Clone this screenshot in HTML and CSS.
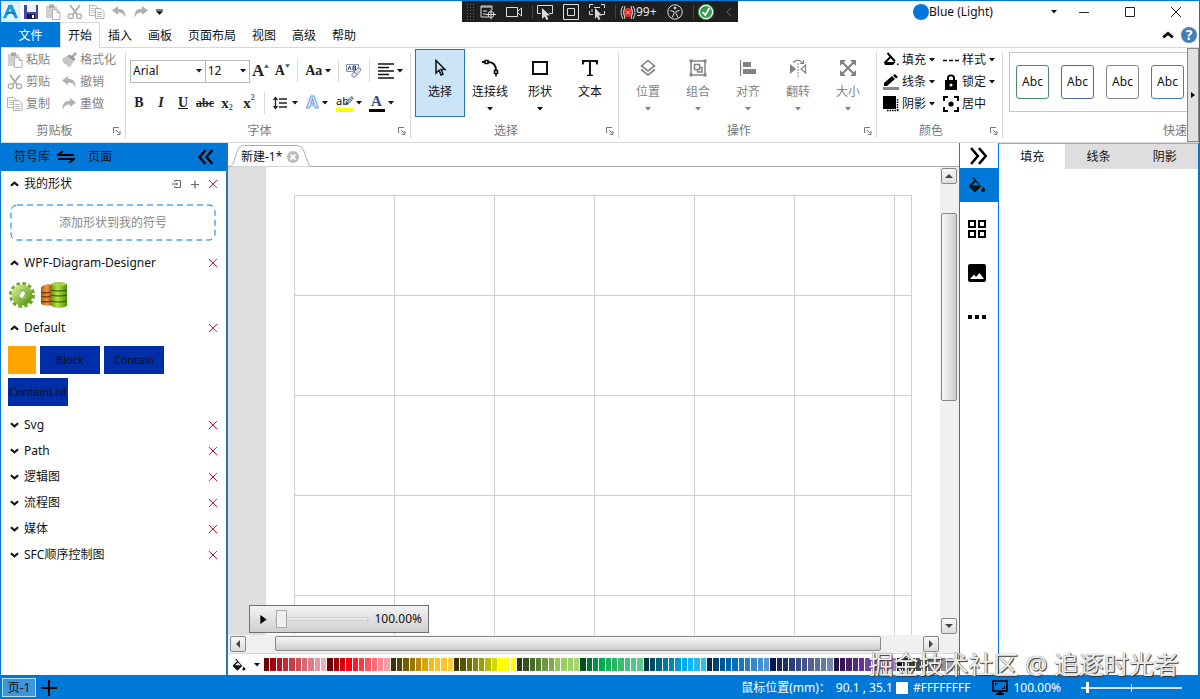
FILE: index.html
```html
<!DOCTYPE html>
<html lang="zh-CN">
  <head>
    <meta charset="UTF-8" />
    <meta name="viewport" content="width=device-width, initial-scale=1.0" />
    <title>新建-1*</title>
    <link rel="stylesheet" href="styles.css">
  </head>
  <body>
    <!-- shared icons -->
    <svg class="sprite" aria-hidden="true">
      <symbol id="caret" viewBox="0 0 6 4"><path d="M0 0h6L3 3.6z" fill="currentColor" /></symbol>
      <symbol id="close" viewBox="0 0 10 10"><path d="M1 1l8 8M9 1L1 9" stroke="currentColor" stroke-width="1" /></symbol>
      <symbol id="up" viewBox="0 0 10 6"><path d="M1 5l4-3.4L9 5" fill="none" stroke="currentColor" stroke-width="2.400" /></symbol>
      <symbol id="down" viewBox="0 0 10 6"><path d="M1 1l4 3.4L9 1" fill="none" stroke="currentColor" stroke-width="2.400" /></symbol>
      <symbol id="launcher" viewBox="0 0 8 8"><path d="M.5 6V.5H6M3 3l3.5 3.500M7 4v3.500H4" fill="none" stroke="currentColor" /></symbol>
      <symbol id="paste" viewBox="0 0 16 16">
        <path d="M1 2h3V0h5v2h3v3H7v9H1z" fill="#d0d0d0" /><path d="M4 1h5v3H4z" fill="#aaa" />
        <path d="M7.500 5.500h4.500l3 3v7h-7.500z" fill="#fff" stroke="#b0b0b0" /><path d="M12 5.500v3h3" fill="none" stroke="#b0b0b0" />
      </symbol>
      <symbol id="cut" viewBox="0 0 16 16">
        <path d="M3 1l7.500 10M13 1L5.500 11" fill="none" stroke="#aaa" stroke-width="1.800" />
        <ellipse cx="3.800" cy="12.200" rx="2.600" ry="2.300" fill="none" stroke="#aaa" stroke-width="1.300" /><ellipse cx="12" cy="12.200" rx="2.600" ry="2.300" fill="none" stroke="#aaa" stroke-width="1.300" />
      </symbol>
      <symbol id="copy" viewBox="0 0 16 16">
        <path d="M.5 1.500h6l3 3v7h-9z" fill="#fff" stroke="#b5b5b5" /><path d="M2 4.500h4M2 6.500h5M2 8.500h5" stroke="#c4c4c4" />
        <path d="M6.500 4.500h5.500l3 3v7H6.500z" fill="#fff" stroke="#b0b0b0" /><path d="M8 8.500h5M8 10.500h5M8 12.500h5" stroke="#b8b8b8" />
      </symbol>
      <symbol id="undo" viewBox="0 0 16 16"><path d="M1 6.500L7 2v2.800c5 0 8 3.200 7.500 9.200C13 10 11 8.500 7 8.500V11z" fill="#b0b0b0" /></symbol>
      <symbol id="redo" viewBox="0 0 16 16"><path d="M15 6.500L9 2v2.800C4 4.800 1 8 1.500 14 3 10 5 8.500 9 8.500V11z" fill="#b0b0b0" /></symbol>
      <symbol id="bucket" viewBox="0 0 20 20"><path d="M6 1l-1.300 1.300 2.500 2.500-5.700 5.700q-.8.900 0 1.800l5.300 5.300q.9.700 1.700 0l6.200-6.200zM8.500 6.300l4.200 4.200H4.300z" fill="currentColor" fill-rule="evenodd" /><path d="M17 12q4.500 5.500 0 5.700t0-5.700z" fill="currentColor" /></symbol>
    </svg>

    <div class="window">
      <header class="title-bar">
        <div class="quick-access">
          <svg class="logo" viewBox="0 0 20 20" aria-label="logo"><path d="M.5.5h19v19H.5z" fill="#e6f5fc" stroke="#b7ddf0" stroke-width=".6" /><path d="M2 17L8 3h4l6 14h-3.500l-5-10-4 10z" fill="#19a0dc" /><path d="M6 13q4-4 9 0" fill="none" stroke="#0879b8" stroke-width="2" /></svg>
          <button aria-label="保存"><svg viewBox="0 0 16 16"><path d="M1 1h14v14H1z" fill="#4148a8" /><path d="M4 1h9v7H4z" fill="#eef2fa" /><path d="M4 10h8v5H4z" fill="#161b50" /><path d="M9 11h2v3H9z" fill="#fff" /></svg></button>
          <button aria-label="粘贴"><svg><use href="#paste" /></svg></button>
          <button aria-label="剪切"><svg><use href="#cut" /></svg></button>
          <button aria-label="复制"><svg><use href="#copy" /></svg></button>
          <button aria-label="撤销"><svg><use href="#undo" /></svg></button>
          <button aria-label="重做"><svg><use href="#redo" /></svg></button>
          <button class="more" aria-label="更多"><svg viewBox="0 0 8 6"><path d="M0 0h8v1.200H0zM0 2.200h8L4 6z" /></svg></button>
        </div>
        <div class="theme">
          <span class="theme-dot"></span>
          <select aria-label="主题"><option>Blue (Light)</option></select>
          <svg class="caret"><use href="#caret" /></svg>
        </div>
        <div class="window-buttons">
          <button aria-label="最小化"><svg viewBox="0 0 10 10"><path d="M0 5.500h10" /></svg></button>
          <button aria-label="最大化"><svg viewBox="0 0 10 10"><path d="M.5.5h9v9h-9z" /></svg></button>
          <button aria-label="关闭"><svg viewBox="0 0 10 10"><path d="M0 0l10 10M10 0L0 10" /></svg></button>
        </div>
        <div class="debug-bar">
          <span class="grip"></span>
          <svg viewBox="0 0 16 16"><path d="M9 13H1V2h11v4M1 3h11M3 7h4M3 10h3" /><circle cx="11" cy="10.500" r="3" /><path d="M11 5.500v10M6 10.500h10" /></svg>
          <svg viewBox="0 0 16 16"><path d="M.5 3.500h11v9H.5zM12 7l3.500-3v8L12 9" /></svg>
          <i></i>
          <svg viewBox="0 0 16 16"><path d="M4 9.500H.5v-8h15v8H12" /><path d="M5 4l8 7.500H9.500l2 3.500-2 1-1.800-3.500L5 15z" fill="#ddd" stroke="none" /></svg>
          <svg viewBox="0 0 16 16"><path d="M.5.5h15v15H.5zM4.500 4.500h7v7h-7z" /></svg>
          <svg viewBox="0 0 16 16"><path d="M.5 4V.5H4M12 .5h3.500V4M.5 7v3.500H4M15.500 7v3.500H12M5 3.500h6M3 5v3" /><path d="M6 4l7 7.500H9.500l2 3.500-2 1-1.500-3.500L6 15z" fill="#ddd" stroke="none" /></svg>
          <i></i>
          <span class="errors"><svg viewBox="0 0 16 16"><circle cx="8" cy="8.500" r="4.800" fill="#d82f22" stroke="none" /><path d="M6.300 6.800l3.400 3.400M9.700 6.800l-3.400 3.400M3 2Q-1 8 3 15M5 2Q2 8 5 15M13 2q4 6 0 13M11 2q3 6 0 13" /></svg>99+</span>
          <svg viewBox="0 0 16 16"><circle cx="8" cy="8" r="7.200" /><circle cx="8" cy="4" r="1" fill="#ddd" /><path d="M3.500 6.500L7 7.500v2L5 13.500M12.500 6.500L9 7.500v2l2 4" /></svg>
          <i></i>
          <svg viewBox="0 0 16 16"><circle cx="8" cy="8" r="7.600" fill="#fff" stroke="#43a251" /><circle cx="8" cy="8" r="6" fill="#35984a" stroke="none" /><path d="M4.500 8l2.700 3 4.300-7" stroke="#fff" stroke-width="1.800" /></svg>
          <svg class="fold" viewBox="0 0 8 12"><path d="M7 1L2 6l5 5" stroke="#777" /></svg>
        </div>
      </header>

      <nav class="menu">
        <button class="file">文件</button>
        <button class="active">开始</button>
        <button>插入</button>
        <button>画板</button>
        <button>页面布局</button>
        <button>视图</button>
        <button>高级</button>
        <button>帮助</button>
        <div class="menu-right">
          <button aria-label="折叠功能区"><svg class="fold-icon"><use href="#up" /></svg></button>
          <button class="help" aria-label="帮助">?</button>
        </div>
      </nav>

      <section class="ribbon">
        <div class="group clipboard">
          <div class="rows">
            <button disabled><svg><use href="#paste" /></svg>粘贴</button>
            <button disabled><svg viewBox="0 0 16 16"><path d="M9.500 5L14 0l2 1.500-4 5z" fill="#aaa" /><path d="M1 7l5-3 7 5-4 6-3-1-1-2-2 0z" fill="#c6c6c6" /><path d="M6 4l7 5 1.500-2L9 2.500z" fill="#999" /></svg>格式化</button>
            <button disabled><svg><use href="#cut" /></svg>剪贴</button>
            <button disabled><svg><use href="#undo" /></svg>撤销</button>
            <button disabled><svg><use href="#copy" /></svg>复制</button>
            <button disabled><svg><use href="#redo" /></svg>重做</button>
          </div>
          <footer><span>剪贴板</span><button aria-label="剪贴板设置"><svg><use href="#launcher" /></svg></button></footer>
        </div>

        <div class="group font">
          <div class="tool-row">
            <label class="combo"><select aria-label="字体"><option>Arial</option></select><svg class="caret"><use href="#caret" /></svg></label>
            <label class="combo size"><select aria-label="字号"><option>12</option></select><svg class="caret"><use href="#caret" /></svg></label>
            <button class="glyph grow" aria-label="增大字号">A<svg viewBox="0 0 6 4"><path d="M0 4h6L3 0z" /></svg></button>
            <button class="glyph shrink" aria-label="减小字号">A<svg viewBox="0 0 6 4"><path d="M0 0h6L3 4z" /></svg></button>
            <i></i>
            <button class="glyph wide" aria-label="大小写">Aa<svg class="caret"><use href="#caret" /></svg></button>
            <i></i>
            <button aria-label="清除格式"><svg class="icon" viewBox="0 0 16 16"><path d="M.5 1.500h12v7H.5z" fill="#f4f6fc" stroke="#8b93b5" /><path d="M2 7l1.500-4L5 7M7 3v4h2.500V3zM7 5h2" fill="none" stroke="#333d6b" /><path d="M6 11l6-6q3-1 3 2l-6 7q-4 1-3-3z" fill="#dfe4ee" stroke="#8089a3" /><path d="M8 9q3 1 3 3" fill="none" stroke="#8089a3" /></svg></button>
            <i></i>
            <button class="wide" aria-label="对齐"><svg class="icon" viewBox="0 0 16 16"><path d="M0 1h16M0 4.500h11M0 8h16M0 11.500h11M0 15h16" stroke="#111" stroke-width="1.600" /></svg><svg class="caret"><use href="#caret" /></svg></button>
          </div>
          <div class="tool-row second">
            <button class="glyph"><b>B</b></button>
            <button class="glyph"><em>I</em></button>
            <button class="glyph"><u>U</u></button>
            <button class="glyph strike"><s>abc</s></button>
            <button class="glyph script">x<sub>2</sub></button>
            <button class="glyph script">x<sup>2</sup></button>
            <i></i>
            <button class="wide" aria-label="行距"><svg class="icon" viewBox="0 0 16 16"><path d="M2.500 3v10M.5 5l2-2.500 2 2.500M.5 11l2 2.500 2-2.500M6 4h8M6 8h8M6 12h8" fill="none" stroke="#222" stroke-width="1.300" /></svg><svg class="caret"><use href="#caret" /></svg></button>
            <button class="glyph wide outline">A<svg class="caret"><use href="#caret" /></svg></button>
            <button class="wide" aria-label="突出显示"><span class="marker">ab<svg viewBox="0 0 16 16"><path d="M3 13l2-5 6-6 3 2-6 7z" fill="#9ab0c9" stroke="#49617e" /><path d="M3 13l2-4 2 2z" fill="#333" /></svg></span><svg class="caret"><use href="#caret" /></svg></button>
            <button class="glyph wide"><span class="ink">A</span><svg class="caret"><use href="#caret" /></svg></button>
          </div>
          <footer><span>字体</span><button aria-label="字体设置"><svg><use href="#launcher" /></svg></button></footer>
        </div>

        <div class="group select">
          <div class="big-row">
            <button class="big active"><svg viewBox="0 0 18 18"><path d="M5 1.500v12.500l3-2.800 2 4.800 2-.9-2-4.600h4z" fill="none" stroke="currentColor" stroke-width="1.500" /></svg>选择</button>
            <button class="big"><svg viewBox="0 0 18 18"><path d="M7 3q8 0 8 9" fill="none" stroke="currentColor" stroke-width="2" /><path d="M1 3h3" stroke="currentColor" stroke-width="2" /><path d="M4 1.500h3v3H4zM13.500 11.500h3v3h-3zM15 14.500v3" fill="#fff" stroke="currentColor" stroke-width="1.600" /></svg>连接线<svg class="caret"><use href="#caret" /></svg></button>
            <button class="big"><svg viewBox="0 0 18 18"><path d="M2 3h14v12H2z" fill="none" stroke="currentColor" stroke-width="2" /></svg>形状<svg class="caret"><use href="#caret" /></svg></button>
            <button class="big"><svg viewBox="0 0 18 18"><path d="M1 1h16v4.500h-1.500L14.500 3H10v12.500l2 .5v1H6v-1l2-.5V3H3.500l-1 2.500H1z" fill="currentColor" /></svg>文本</button>
          </div>
          <footer><span>选择</span><button aria-label="选择设置"><svg><use href="#launcher" /></svg></button></footer>
        </div>

        <div class="group arrange">
          <div class="big-row">
            <button class="big" disabled><svg viewBox="0 0 18 18"><path d="M9 1.500L15.500 7 9 12 2.500 7zM2 10.500L9 16l7-5.500" fill="none" stroke="currentColor" stroke-width="1.600" /></svg>位置<svg class="caret"><use href="#caret" /></svg></button>
            <button class="big" disabled><svg viewBox="0 0 18 18"><path d="M2 2h14v14H2zM5.500 5.500h5v5h-5zM11 8.500h2v4.500H8.500v-2" fill="none" stroke="currentColor" stroke-width="1.500" /><path d="M.5.500h3v3h-3zM14.500.500h3v3h-3zM.5 14.500h3v3h-3zM14.500 14.500h3v3h-3z" fill="currentColor" /></svg>组合<svg class="caret"><use href="#caret" /></svg></button>
            <button class="big" disabled><svg viewBox="0 0 18 18"><path d="M1 1h1.200v16H1zM4 3h8v5H4zM4 10h13v5H4z" fill="currentColor" /></svg>对齐<svg class="caret"><use href="#caret" /></svg></button>
            <button class="big" disabled><svg viewBox="0 0 18 18"><path d="M1 5l6 5-6 5z" fill="currentColor" /><path d="M16.500 6v8L12 10zM4 3.500Q9-1 14 4M14.500 1v3.500H11" fill="none" stroke="currentColor" stroke-width="1.200" /><path d="M9 4v14" stroke="currentColor" stroke-dasharray="2 1" /></svg>翻转<svg class="caret"><use href="#caret" /></svg></button>
            <button class="big" disabled><svg viewBox="0 0 18 18"><path d="M3 3l12 12M15 3L3 15" stroke="currentColor" stroke-width="2.200" /><path d="M1 1h6L1 7zM17 1v6l-6-6zM1 17v-6l6 6zM17 17h-6l6-6z" fill="currentColor" /></svg>大小<svg class="caret"><use href="#caret" /></svg></button>
          </div>
          <footer><span>操作</span><button aria-label="操作设置"><svg><use href="#launcher" /></svg></button></footer>
        </div>

        <div class="group color">
          <div class="rows">
            <button><svg viewBox="0 0 16 16"><path d="M4.500 1l7.500 8.500M8 4.500L2 10.500" fill="none" stroke="#000" stroke-width="1.900" /><path d="M1 10h11.500L10 13H2zM14 11.500h1.500v1.500H14z" /></svg>填充<svg class="caret"><use href="#caret" /></svg></button>
            <button><svg viewBox="0 0 16 16"><path d="M0 8.500h4M6 8.500h4M12 8.500h4" stroke="#000" stroke-width="1.500" /></svg>样式<svg class="caret"><use href="#caret" /></svg></button>
            <button><svg viewBox="0 0 16 16"><path d="M1 12V9l8-7 3 3-8 7zM10 1.500L12 0l3 3-2 1.500z" /><path d="M0 13h16v3H0z" fill="#888" /></svg>线条<svg class="caret"><use href="#caret" /></svg></button>
            <button><svg viewBox="0 0 16 16"><path d="M4 6V4q0-3.500 4-3.500T12 4v2h2v10H2V6zm2 0h4V4q0-1.800-2-1.800T6 4zm2 3.500a1.500 1.500 0 100 3 1.500 1.500 0 000-3z" fill-rule="evenodd" /></svg>锁定<svg class="caret"><use href="#caret" /></svg></button>
            <button><svg viewBox="0 0 16 16"><path d="M0 0h13v13H0z" /><path d="M14.500 3v12.500M4 14.500h12" stroke="#000" stroke-width="1.500" stroke-dasharray="1.500 1" /></svg>阴影<svg class="caret"><use href="#caret" /></svg></button>
            <button><svg viewBox="0 0 16 16"><path d="M1 5V1h4M11 1h4v4M1 11v4h4M11 15h4v-4" fill="none" stroke="#000" stroke-width="2" /><circle cx="8" cy="8" r="2.600" /></svg>居中</button>
          </div>
          <footer><span>颜色</span><button aria-label="颜色设置"><svg><use href="#launcher" /></svg></button></footer>
        </div>

        <div class="group styles">
          <div class="gallery">
            <button class="green">Abc</button>
            <button class="blue">Abc</button>
            <button class="gray">Abc</button>
            <button class="sky">Abc</button>
          </div>
          <footer><span>快速</span></footer>
        </div>
        <button class="ribbon-next" aria-label="向右滚动"><svg viewBox="0 0 4 6"><path d="M0 0l4 3-4 3z" /></svg></button>
      </section>

      <main class="workspace">
        <aside class="library">
          <header class="library-head">
            <button>符号库</button>
            <svg viewBox="0 0 18 12"><path d="M0 4h17M6 0L1 4M1 8h17M12 12l5-4" fill="none" stroke="#000" stroke-width="1.800" /></svg>
            <button>页面</button>
            <button class="collapse" aria-label="收起"><svg viewBox="0 0 16 16"><path d="M8 1L2 8l6 7M15 1L9 8l6 7" fill="none" stroke="#000" stroke-width="2.400" /></svg></button>
          </header>
          <div class="section">
            <button class="toggle"><svg><use href="#up" /></svg>我的形状</button>
            <button class="tool" aria-label="导入"><svg viewBox="0 0 10 10"><path d="M2.500 3V1.500h6v7h-6V7M0 5h5.500M4 3.500L5.500 5 4 6.500" fill="none" stroke="currentColor" /></svg></button>
            <button class="tool" aria-label="新增"><svg viewBox="0 0 10 10"><path d="M1 5.500h8M5 1.500v8" stroke="currentColor" stroke-width="1.200" /></svg></button>
            <button class="remove" aria-label="删除"><svg><use href="#close" /></svg></button>
          </div>
          <div class="drop-box">
            <svg><rect x="1" y="1" rx="6" /></svg>
            添加形状到我的符号
          </div>
          <div class="section">
            <button class="toggle"><svg><use href="#up" /></svg>WPF-Diagram-Designer</button>
            <button class="remove" aria-label="删除"><svg><use href="#close" /></svg></button>
          </div>
          <div class="shapes">
            <svg viewBox="0 0 28 28">
              <defs><linearGradient id="leaf" x2="1" y2="1"><stop stop-color="#c9e48a" /><stop offset="1" stop-color="#5f9e16" /></linearGradient></defs>
              <circle cx="14" cy="14" r="11" fill="none" stroke="#6fa62a" stroke-width="4" stroke-dasharray="3.400 2.360" />
              <circle cx="14" cy="14" r="7" fill="none" stroke="url(#leaf)" stroke-width="7" />
              <ellipse cx="14" cy="13.500" rx="2.800" ry="4" fill="#fff" stroke="#7da63c" transform="rotate(25 14 14)" />
            </svg>
            <svg viewBox="0 0 28 28">
              <defs>
                <linearGradient id="green"><stop stop-color="#5c9a10" /><stop offset=".4" stop-color="#b5e23c" /><stop offset="1" stop-color="#4a8c08" /></linearGradient>
                <linearGradient id="rust"><stop stop-color="#b35b12" /><stop offset=".5" stop-color="#e99b45" /><stop offset="1" stop-color="#a84f0b" /></linearGradient>
              </defs>
              <path d="M1 6q5-4 11-2v20q-7 2-11-1z" fill="url(#rust)" />
              <path d="M1 11q4 2 10 0M1 15q4 2 10 0M1 20q4 2 10 0" fill="none" stroke="#6b3208" stroke-width="1.300" />
              <path d="M11 3q8-4 16 0v22q-8 4-16 0z" fill="url(#green)" />
              <ellipse cx="19" cy="3.200" rx="7.500" ry="2" fill="#a5d14d" />
              <path d="M11 9q8 2 16 0M11 14q8 2 16 0M11 20q8 2 16 0" fill="none" stroke="#2a5405" stroke-width="1.100" />
            </svg>
          </div>
          <div class="section">
            <button class="toggle"><svg><use href="#up" /></svg>Default</button>
            <button class="remove" aria-label="删除"><svg><use href="#close" /></svg></button>
          </div>
          <div class="shapes">
            <span class="swatch"></span>
            <span class="block">Block</span>
            <span class="block">Contain</span>
            <span class="block">ContainList</span>
          </div>
          <div class="section"><button class="toggle"><svg><use href="#down" /></svg>Svg</button><button class="remove" aria-label="删除"><svg><use href="#close" /></svg></button></div>
          <div class="section"><button class="toggle"><svg><use href="#down" /></svg>Path</button><button class="remove" aria-label="删除"><svg><use href="#close" /></svg></button></div>
          <div class="section"><button class="toggle"><svg><use href="#down" /></svg>逻辑图</button><button class="remove" aria-label="删除"><svg><use href="#close" /></svg></button></div>
          <div class="section"><button class="toggle"><svg><use href="#down" /></svg>流程图</button><button class="remove" aria-label="删除"><svg><use href="#close" /></svg></button></div>
          <div class="section"><button class="toggle"><svg><use href="#down" /></svg>媒体</button><button class="remove" aria-label="删除"><svg><use href="#close" /></svg></button></div>
          <div class="section"><button class="toggle"><svg><use href="#down" /></svg>SFC顺序控制图</button><button class="remove" aria-label="删除"><svg><use href="#close" /></svg></button></div>
        </aside>

        <section class="editor">
          <div class="doc-tabs">
            <div class="doc-tab">
              <svg class="tab-shape" viewBox="0 0 84 22" preserveAspectRatio="none"><path d="M0 21.500C5 21 6 3 11 1.500Q12 .5 15 .5h54q4 0 6 4l5 13q1 4 4 4" fill="#fff" stroke="#aaa" /></svg>
              <span>新建-1*</span>
              <button aria-label="关闭标签"><svg viewBox="0 0 12 12"><circle cx="6" cy="6" r="6" fill="#bbb" /><path d="M3.500 3.500l5 5M8.500 3.500l-5 5" stroke="#fff" stroke-width="1.800" /></svg></button>
            </div>
          </div>
          <div class="canvas-row">
            <div class="canvas">
              <div class="grid"></div>
            </div>
            <div class="scroll vertical">
              <button aria-label="向上"><svg viewBox="0 0 8 4"><path d="M0 4h8L4 0z" /></svg></button>
              <span class="thumb"></span>
              <button aria-label="向下"><svg viewBox="0 0 8 4"><path d="M0 0h8L4 4z" /></svg></button>
            </div>
            <div class="zoom-box">
              <svg viewBox="0 0 7 10"><path d="M0 0l7 5-7 5z" /></svg>
              <input type="range" min="0" max="100" value="0" aria-label="缩放">
              <span>100.00%</span>
            </div>
          </div>
          <div class="scroll horizontal">
            <button aria-label="向左"><svg viewBox="0 0 4 8"><path d="M4 0v8L0 4z" /></svg></button>
            <span class="thumb"></span>
            <button aria-label="向右"><svg viewBox="0 0 4 8"><path d="M0 0v8l4-4z" /></svg></button>
          </div>
          <div class="palette">
            <button aria-label="填充颜色"><svg class="palette-icon"><use href="#bucket" /></svg><svg class="caret"><use href="#caret" /></svg></button>
            <div class="colors"></div>
          </div>
        </section>

        <nav class="side-nav">
          <button class="expand" aria-label="展开"><svg viewBox="0 0 16 16"><path d="M1 1l6 7-6 7M8 1l6 7-6 7" fill="none" stroke="#000" stroke-width="2.200" /></svg></button>
          <button class="active" aria-label="填充"><svg><use href="#bucket" /></svg></button>
          <button aria-label="布局"><svg viewBox="0 0 18 18"><path d="M1 1h6v6H1zM11 1h6v6h-6zM1 11h6v6H1zM11 11h6v6h-6z" fill="none" stroke="#000" stroke-width="2" /></svg></button>
          <button aria-label="图片"><svg viewBox="0 0 18 18"><path d="M2 0h14q2 0 2 2v14q0 2-2 2H2q-2 0-2-2V2q0-2 2-2zm0 15h14l-4.500-6-3.500 4-2-2.500z" fill-rule="evenodd" /></svg></button>
          <button aria-label="更多"><svg viewBox="0 0 18 18"><path d="M0 7h4v4H0zM7 7h4v4H7zM14 7h4v4h-4z" /></svg></button>
        </nav>

        <aside class="properties">
          <div class="property-tabs">
            <button class="active">填充</button>
            <button>线条</button>
            <button>阴影</button>
          </div>
        </aside>
      </main>

      <footer class="status">
        <button class="page">页-1</button>
        <button class="add" aria-label="添加页"><svg viewBox="0 0 16 16"><path d="M0 8h16M8 0v16" stroke="#000" stroke-width="2" /></svg></button>
        <span class="position">鼠标位置(mm)：</span>
        <span>90.1 , 35.1</span>
        <span class="color-box"></span>
        <span class="hex">#FFFFFFFF</span>
        <svg class="screen" viewBox="0 0 16 15"><path d="M1 1h14v10H1z" fill="none" stroke="#000" stroke-width="1.600" /><path d="M6 11h4v2h2v2H4v-2h2z" /><path d="M3.500 6V3.500H6M12.500 6v2.500H10" fill="none" stroke="#000" /></svg>
        <span>100.00%</span>
        <input type="range" min="0" max="100" value="5" aria-label="页面缩放">
      </footer>

      <div class="watermark">掘金技术社区 @ 追逐时光者</div>
    </div>

    <script>
      const colors = [
        "#6b0008 #a50008 #c0101c #c32a34 #c63c46 #cb5259 #d6686f #df7d84 #e698a0 #edb0b6",
        "#6b0005 #9c0008 #d2000c #fa0010 #ff1820 #ff3845 #f85560 #ff6b75 #ff8790 #ff9ca5",
        "#403008 #544400 #745f00 #95770a #b28b10 #dba500 #f5ba10 #ffc020 #ffc52c #ffcb3d",
        "#343300 #545400 #6f7000 #858600 #9d9f00 #babc00 #d4d600 #ffff00 #ffff00 #ffff00",
        "#263b16 #36501f #486b2b #598036 #6b9a40 #7aab48 #91c957 #98d05f #9dd26a #a4d676",
        "#00501f #007430 #009440 #00a84e #16b15b #27b565 #37bc70 #43c178 #50c784 #5dca8c",
        "#003344 #004a60 #006480 #007ba0 #0088b5 #009bcc #00adeb #12b4f1 #20b9f4 #31bdf4",
        "#002b4f #003e6d #005490 #0063a8 #0070bd #1679c1 #2680c6 #3389c9 #4190cd #5098d0",
        "#001851 #13265e #1b3268 #293f78 #384b82 #46568b #52648f #5a6e99 #6579a3 #7487ad",
        "#23133c #361453 #49216c #5a2883 #68309a #7541a3 #8250ac #8d60b5 #9a71be #a681c5",
        "#111111 #292929 #3a3a3a #4c4c4c #5e5e5e #707070 #828282 #949494 #a6a6a6 #b8b8b8"
      ];
      const bar = document.querySelector(".colors");

      colors.join(" ").split(" ").forEach((color) => {
        const cell = document.createElement("span");
        cell.style.backgroundColor = color;
        bar.appendChild(cell);
      });
    </script>
  </body>
</html>
```
FILE: styles.css
```css
* {
  box-sizing: border-box;
  margin: 0;
  padding: 0;
}

body {
  font-family: "Noto Sans", "Noto Sans CJK SC", sans-serif;
  font-size: 12px;
  line-height: 16px;
  color: #111;
  background-color: #fff;
}

button,
select,
input {
  font: inherit;
  color: inherit;
  background: none;
  border: none;
  border-radius: 0;
}

button {
  display: flex;
  align-items: center;
  justify-content: center;
  white-space: nowrap;
}

svg {
  flex-shrink: 0;
}

.sprite {
  position: absolute;
  width: 0;
  height: 0;
}

.caret {
  width: 6px;
  height: 4px;
}

.window {
  position: relative;
  display: flex;
  flex-direction: column;
  height: 100vh;
  overflow: hidden;
  border: 1px solid #0078d7;
  border-bottom: none;
}

/* title bar */
.title-bar {
  display: flex;
  height: 21px;
  flex-shrink: 0;
}

.quick-access {
  display: flex;
  align-items: center;
  flex: 1;
}

.quick-access button {
  width: 22px;
}

.quick-access button svg {
  width: 16px;
  height: 16px;
}

.quick-access .logo {
  width: 19px;
  height: 19px;
}

.quick-access .more {
  width: 14px;
}

.quick-access .more svg {
  width: 7px;
  height: 6px;
}

.theme {
  display: flex;
  align-items: center;
  width: 148px;
}

.theme-dot {
  width: 16px;
  height: 16px;
  border-radius: 50%;
  background-color: #0078d7;
}

.theme select {
  flex: 1;
  appearance: none;
}

.theme .caret {
  margin-right: 4px;
}

.window-buttons {
  display: flex;
}

.window-buttons button {
  width: 46px;
}

.window-buttons svg {
  width: 10px;
  height: 10px;
  fill: none;
  stroke: #222;
}

.debug-bar {
  position: absolute;
  top: 0;
  left: 461px;
  display: flex;
  align-items: center;
  gap: 6px;
  width: 276px;
  height: 21px;
  padding: 0 6px 0 4px;
  color: #e5e5e5;
  background-color: #1f1f1f;
}

.debug-bar svg {
  width: 16px;
  height: 16px;
  fill: none;
  stroke: #ddd;
}

.debug-bar > svg {
  margin-right: 4px;
}

.debug-bar i + svg,
.debug-bar i + .errors {
  margin-left: -2px;
}

.debug-bar .fold {
  width: 7px;
  height: 12px;
  margin: 0 0 0 auto;
}

.debug-bar i {
  width: 1px;
  height: 14px;
  background-color: #444;
}

.grip {
  width: 8px;
  height: 18px;
  background-image: radial-gradient(#666 1px, transparent 1px);
  background-size: 3px 3px;
}

.errors {
  display: flex;
  align-items: center;
  margin-right: 4px;
}

/* menu */
.menu {
  display: flex;
  height: 25px;
  flex-shrink: 0;
}

.menu button {
  padding: 2px 8px 0;
}

.menu .file {
  width: 59px;
  color: #fff;
  background-color: #0078d7;
}

.menu .active {
  position: relative;
  z-index: 1;
  height: 26px;
  padding: 0 7px;
  border: 1px solid #d8d8d8;
  border-bottom: none;
  background-color: #fff;
}

.menu-right {
  display: flex;
  align-items: center;
  gap: 7px;
  margin-left: auto;
  padding-right: 2px;
}

.menu .menu-right button {
  padding: 0;
}

.fold-icon {
  width: 12px;
  height: 8px;
}

.menu .help {
  width: 16px;
  height: 16px;
  border-radius: 50%;
  font-size: 14px;
  font-weight: bold;
  color: #fff;
  background-color: #457fb9;
}

/* ribbon */
.ribbon {
  display: flex;
  height: 96px;
  flex-shrink: 0;
  border-top: 1px solid #d8d8d8;
  border-bottom: 1px solid #d8d8d8;
}

.group {
  display: flex;
  flex-direction: column;
  flex-shrink: 0;
  position: relative;
  padding: 1px 5px 0 4px;
}

.group::after {
  content: "";
  position: absolute;
  top: 4px;
  right: 0;
  bottom: 4px;
  width: 1px;
  background-color: #d8d8d8;
}

.group footer {
  display: flex;
  align-items: center;
  height: 22px;
  margin-top: auto;
  color: #777;
}

.group footer span {
  flex: 1;
  padding-right: 9px;
  text-align: center;
}

.group footer svg {
  width: 8px;
  height: 8px;
}

.clipboard {
  width: 125px;
}

.font {
  width: 285px;
}

.select {
  width: 208px;
}

.arrange {
  width: 258px;
}

.color {
  width: 126px;
}

.group.styles {
  flex: 1;
  min-width: 0;
  overflow: hidden;
  padding: 4px 0 0 6px;
}

.styles::after {
  display: none;
}

.rows {
  display: grid;
  grid-template-columns: 54px 1fr;
  grid-auto-rows: 22px;
}

.rows button {
  justify-content: flex-start;
  gap: 3px;
}

.rows svg {
  width: 16px;
  height: 16px;
}

.rows .caret {
  width: 6px;
  height: 4px;
}

.clipboard .rows {
  padding-left: 2px;
}

.color .rows {
  grid-template-columns: 60px 1fr;
  padding-left: 2px;
}

button:disabled {
  color: #838383;
}

.tool-row {
  display: flex;
  align-items: center;
  height: 22px;
  margin-top: 11px;
}

.tool-row.second {
  margin-top: 10px;
  margin-left: -2px;
}

.tool-row > button {
  width: 22px;
  height: 22px;
}

.tool-row > button.wide {
  width: 32px;
  gap: 3px;
}

.tool-row > i {
  width: 1px;
  height: 22px;
  margin: 0 4px;
  background-color: #d8d8d8;
}

.tool-row .icon {
  width: 16px;
  height: 16px;
}

.combo {
  display: flex;
  align-items: center;
  width: 76px;
  height: 23px;
  padding: 0 3px 0 2px;
  border: 1px solid #b8b8b8;
}

.combo.size {
  width: 45px;
  margin-left: -1px;
}

.combo select {
  flex: 1;
  min-width: 0;
  appearance: none;
}

.glyph {
  font-family: "Liberation Serif", serif;
  font-size: 14px;
  font-weight: bold;
  color: #222;
}

.grow svg,
.shrink svg {
  align-self: flex-start;
  width: 5px;
  height: 4px;
  margin-top: 4px;
  fill: #3a5c94;
}

.glyph.grow {
  font-size: 17px;
}

.glyph.strike {
  font-size: 12px;
}

.glyph.script {
  font-size: 15px;
}

.script sub,
.script sup {
  font-size: 8px;
  line-height: 12px;
  color: #2c5aa0;
}

.script sup {
  align-self: flex-start;
}

.script sub {
  align-self: flex-end;
}

.outline {
  font-family: "Liberation Sans", sans-serif;
  font-size: 17px;
  color: #fff;
  -webkit-text-stroke: 1px #6fa3dd;
  text-shadow: 0 0 3px #9cc6f0;
}

.wide .caret {
  color: #111;
}

.marker {
  display: flex;
  flex-shrink: 0;
  width: 17px;
  height: 17px;
  font-size: 11px;
  line-height: 11px;
  border-bottom: 4px solid #ff0;
}

.marker svg {
  width: 12px;
  height: 12px;
  margin-left: -6px;
}

.ink {
  width: 16px;
  height: 17px;
  font-size: 15px;
  line-height: 13px;
  color: #34507f;
  border-bottom: 3px solid #000;
}

.big-row {
  display: flex;
}

.big {
  flex-direction: column;
  flex-shrink: 0;
  justify-content: flex-start;
  gap: 7px;
  width: 50px;
  height: 68px;
  padding-top: 10px;
}

.big svg {
  width: 18px;
  height: 18px;
}

.big .caret {
  width: 6px;
  height: 4px;
}

.big.active {
  padding-top: 9px;
  border: 1px solid #2a76ac;
  background-color: #cce4f7;
}

.gallery {
  display: flex;
  align-items: center;
  gap: 12px;
  height: 60px;
  padding-left: 6px;
  border: 1px solid #c6c6c6;
  border-right: none;
}

.gallery button {
  width: 33px;
  height: 34px;
  flex-shrink: 0;
  border: 1px solid;
  border-radius: 3px;
  background-color: #fff;
}

.gallery .green {
  border-color: #4a8b70;
}

.gallery .blue {
  border-color: #4a6a9c;
}

.gallery .gray {
  border-color: #888;
}

.gallery .sky {
  border-color: #4482ab;
}

.styles footer span {
  padding-right: 0;
  text-align: right;
}

.ribbon-next {
  width: 12px;
  border: 1px solid #888;
  background-color: #e0e0e0;
}

.ribbon-next svg {
  width: 4px;
  height: 6px;
}

/* workspace */
.workspace {
  display: flex;
  flex: 1;
  min-height: 0;
}

.library {
  width: 227px;
  flex-shrink: 0;
  border-right: 2px solid #2a76ac;
}

.library-head {
  display: flex;
  align-items: center;
  gap: 7px;
  height: 28px;
  padding: 0 12px 0 13px;
  background-color: #0078d7;
}

.library-head > svg {
  width: 18px;
  height: 12px;
}

.library-head button:nth-of-type(2) {
  margin-left: 6px;
}

.library-head .collapse {
  margin-left: auto;
}

.collapse svg {
  width: 17px;
  height: 16px;
}

.section {
  display: flex;
  align-items: center;
  gap: 8px;
  height: 26px;
  padding: 0 8px 0 9px;
}

.toggle {
  gap: 5px;
  margin-right: auto;
}

.toggle svg {
  width: 9px;
  height: 6px;
}

.tool,
.remove {
  color: #666;
}

.section .remove {
  color: #e81123;
}

.tool svg,
.remove svg {
  width: 10px;
  height: 10px;
}

.drop-box {
  position: relative;
  display: flex;
  align-items: center;
  justify-content: center;
  height: 37px;
  margin: 7px 10px 9px 9px;
  color: #888;
}

.drop-box svg {
  position: absolute;
  inset: 0;
  width: 100%;
  height: 100%;
}

.drop-box rect {
  width: calc(100% - 2px);
  height: calc(100% - 2px);
  fill: none;
  stroke: #0078d7;
  stroke-dasharray: 6 4;
}

.shapes {
  display: flex;
  flex-wrap: wrap;
  gap: 4px;
  padding: 5px 7px 6px;
}

.shapes svg,
.swatch {
  width: 28px;
  height: 28px;
}

.swatch {
  background-color: #ffa500;
}

.block {
  width: 60px;
  height: 28px;
  font-size: 11px;
  line-height: 28px;
  text-align: center;
  background-color: #002da8;
}

/* editor */
.editor {
  display: flex;
  flex-direction: column;
  flex: 1;
  min-width: 0;
  border-right: 1px solid #666;
}

.doc-tabs {
  height: 24px;
  padding: 2px 0 0 2px;
  border-bottom: 1px solid #aaa;
}

.doc-tab {
  position: relative;
  display: flex;
  align-items: center;
  gap: 5px;
  width: 82px;
  height: 22px;
  padding: 2px 0 0 11px;
}

.doc-tab span,
.doc-tab button {
  position: relative;
}

.doc-tab button svg {
  width: 12px;
  height: 12px;
}

.tab-shape {
  position: absolute;
  inset: 0;
  width: 100%;
  height: 100%;
}

.canvas-row {
  position: relative;
  display: flex;
  flex: 1;
  min-height: 0;
}

.canvas {
  flex: 1;
  padding: 28px 28px 0;
  border-left: 38px solid #dedede;
}

.grid {
  height: 100%;
  border-right: 1px solid #d0d0d0;
  background-image:
    linear-gradient(#d0d0d0 1px, transparent 1px),
    linear-gradient(90deg, #d0d0d0 1px, transparent 1px);
  background-size: 100px 100px;
}

.scroll {
  display: flex;
  background-color: #f0f0f0;
}

.scroll button,
.thumb {
  border: 1px solid #888;
  border-radius: 2px;
}

.scroll button {
  width: 16px;
  height: 16px;
  background-image: linear-gradient(#f8f8f8, #ddd);
}

.scroll button svg {
  width: 8px;
  height: 8px;
  fill: #444;
}

.vertical {
  flex-direction: column;
  justify-content: space-between;
  width: 19px;
  padding: 1px 2px 1px 1px;
}

.vertical .thumb {
  height: 188px;
  margin-bottom: 188px;
  background-image: linear-gradient(90deg, #f8f8f8, #ccc);
}

.horizontal {
  gap: 29px;
  height: 19px;
  padding: 1px 20px 2px 2px;
  border-bottom: 1px solid #d8d8d8;
}

.horizontal .thumb {
  flex: 1;
  margin-right: 13px;
  background-image: linear-gradient(#f8f8f8, #ccc);
}

.zoom-box {
  position: absolute;
  bottom: 2px;
  left: 21px;
  display: flex;
  align-items: center;
  gap: 6px;
  width: 180px;
  height: 28px;
  padding: 0 6px 0 10px;
  border: 1px solid #707070;
  background-image: linear-gradient(#f2f2f2, #d0d0d0);
}

.zoom-box svg {
  width: 7px;
  height: 9px;
}

.zoom-box input {
  flex: 1;
  min-width: 0;
  height: 4px;
  margin-left: 2px;
  appearance: none;
  border: 1px solid #ccc;
  background-color: #e7eaea;
}

.zoom-box input::-webkit-slider-thumb {
  appearance: none;
  width: 11px;
  height: 18px;
  border: 1px solid #aaa;
  background-color: #f0f0f0;
}

.palette {
  display: flex;
  align-items: center;
  height: 21px;
}

.palette button {
  gap: 8px;
  width: 36px;
}

.palette-icon {
  width: 14px;
  height: 14px;
}

.colors {
  display: flex;
  flex: 1;
  gap: 1px;
  height: 13px;
}

.colors span {
  flex: 1;
}

/* right side */
.side-nav {
  display: flex;
  flex-direction: column;
  width: 38px;
  flex-shrink: 0;
}

.side-nav button {
  height: 44px;
  padding-right: 4px;
}

.side-nav svg {
  width: 18px;
  height: 18px;
}

.side-nav .expand {
  height: 25px;
  padding-right: 0;
}

.side-nav .active {
  height: 34px;
  margin-bottom: 5px;
  background-color: #0078d7;
}

.properties {
  width: 201px;
  flex-shrink: 0;
  border-top: 1px solid #aaa;
  border-left: 1px solid #0078d7;
  border-right: 1px solid #0078d7;
}

.property-tabs {
  display: flex;
}

.property-tabs button {
  flex: 1;
  height: 25px;
  background-color: #dedede;
}

.property-tabs .active {
  background-color: #fff;
}

/* status bar */
.status {
  display: flex;
  align-items: center;
  height: 24px;
  flex-shrink: 0;
  padding: 1px 17px 0 1px;
  color: #fff;
  background-color: #0078d7;
}

.status .page {
  width: 34px;
  height: 19px;
  color: #111;
  border: 1px solid #b5dcf5;
  background-color: #3c96dc;
}

.status .add {
  margin-left: 5px;
}

.add svg {
  width: 16px;
  height: 16px;
}

.position {
  margin-left: auto;
  margin-right: 5px;
}

.color-box {
  width: 12px;
  height: 12px;
  margin: 0 5px 0 3px;
  background-color: #fff;
}

.hex {
  margin-right: 22px;
}

.screen {
  width: 16px;
  height: 15px;
  margin-right: 5px;
}

.status input {
  width: 101px;
  height: 10px;
  margin-left: 20px;
  appearance: none;
  background-image:
    linear-gradient(#cfe3f4, #cfe3f4),
    linear-gradient(#cfe3f4, #cfe3f4);
  background-position: center;
  background-repeat: no-repeat;
  background-size: 100% 2px, 1px 8px;
}

.status input::-webkit-slider-thumb {
  appearance: none;
  width: 3px;
  height: 11px;
  background-color: #fff;
}

.watermark {
  position: absolute;
  right: 20px;
  bottom: 19px;
  font-size: 25px;
  line-height: 32px;
  color: #eee;
  text-shadow: 1px 1px 1px #333, 0 0 1px #555;
  pointer-events: none;
}
```
